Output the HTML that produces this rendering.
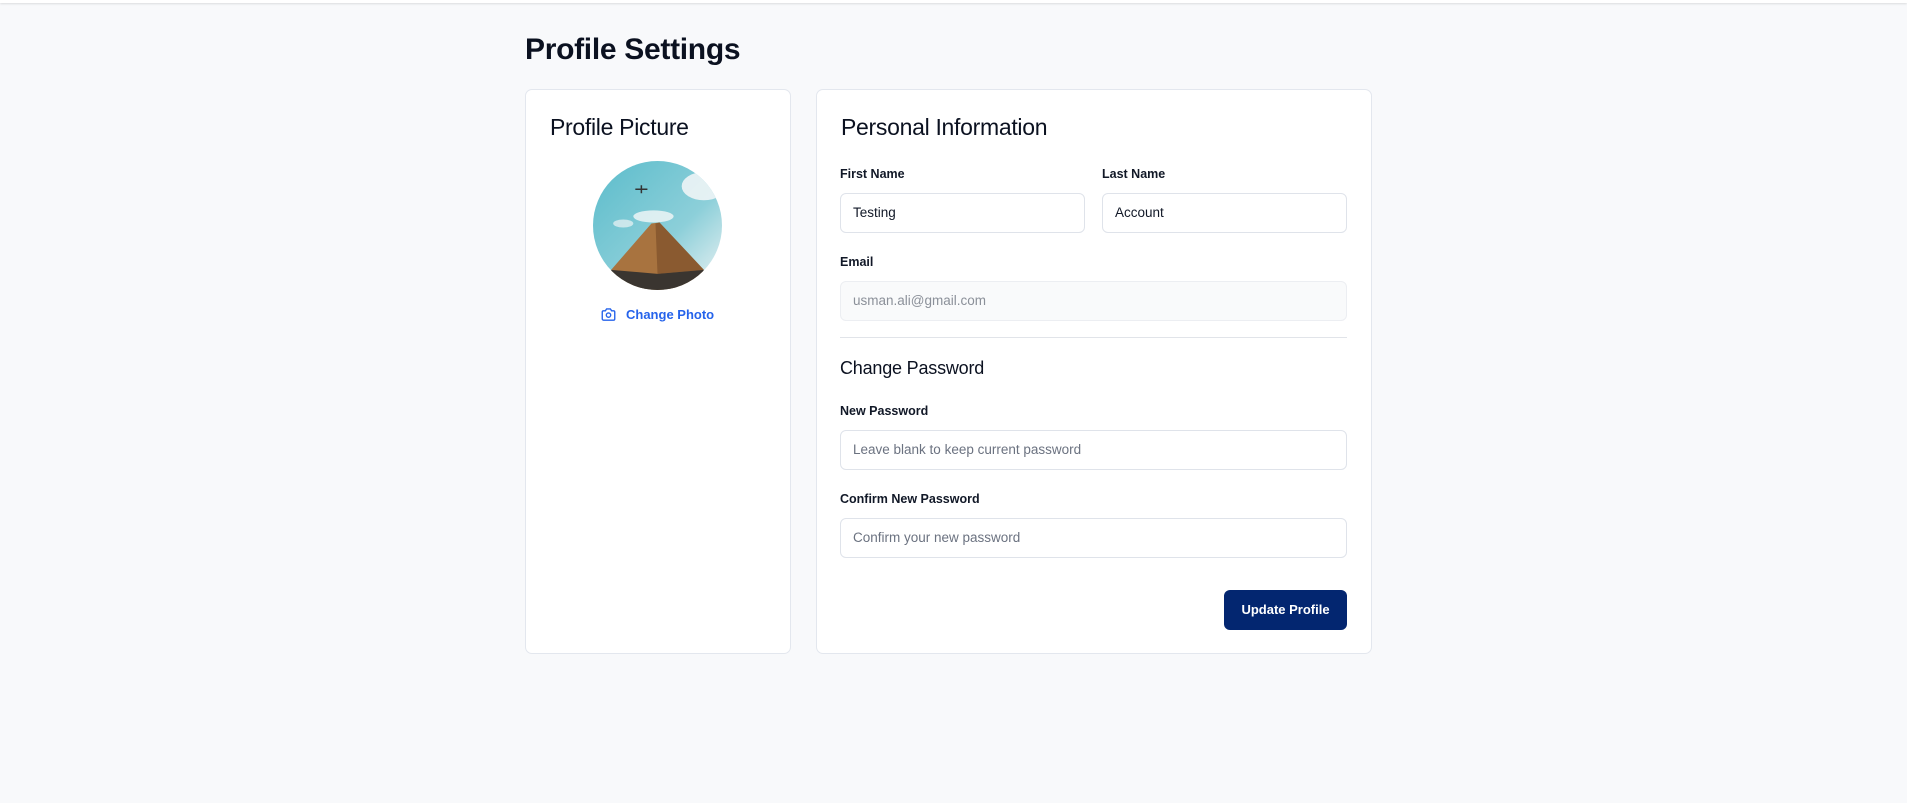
<!DOCTYPE html>
<html><head><meta charset="utf-8"><style>
*{box-sizing:border-box;margin:0;padding:0}
body{width:1907px;height:803px;background:#f8f9fb;font-family:"Liberation Sans",sans-serif;color:#0b1120;position:relative;overflow:hidden}
.top{position:absolute;left:0;top:0;width:1907px;height:3px;background:#fff;box-shadow:0 1px 2px rgba(0,0,0,.12)}
h1{position:absolute;left:525px;top:33px;font-size:30px;font-weight:700;letter-spacing:-0.3px}
.card{position:absolute;top:89px;height:565px;background:#fff;border:1px solid #e3e7ee;border-radius:7px}
h2{position:absolute;font-size:23px;font-weight:400;letter-spacing:-0.3px}
.lbl{position:absolute;font-size:12.5px;font-weight:700;color:#111827}
.inp{position:absolute;height:40px;border:1px solid #dfe3ea;border-radius:6px;background:#fff;font-size:13.5px;padding-left:12px;line-height:38px;color:#111827}
.ph{color:#6b7280}
</style></head><body>
<div class="top"></div>
<h1>Profile Settings</h1>
<div class="card" style="left:525px;width:266px">
  <h2 style="left:24px;top:24px">Profile Picture</h2>
  <svg style="position:absolute;left:67px;top:71px" width="129" height="129" viewBox="0 0 128 128">
    <defs>
      <clipPath id="c"><circle cx="64" cy="64" r="64"/></clipPath>
      <linearGradient id="sky" x1="0" y1="0" x2="1" y2="1"><stop offset="0" stop-color="#5bbccb"/><stop offset=".6" stop-color="#8ccfd9"/><stop offset="1" stop-color="#eef3f4"/></linearGradient>
    </defs>
    <g clip-path="url(#c)">
      <rect width="128" height="128" fill="url(#sky)"/>
      <ellipse cx="110" cy="25" rx="22" ry="14" fill="#f4f7f8" opacity=".85"/>
      <ellipse cx="60" cy="55" rx="20" ry="6" fill="#f4f7f8" opacity=".8"/>
      <ellipse cx="30" cy="62" rx="10" ry="4" fill="#eef4f5" opacity=".7"/>
      <path d="M58 62 L66 61 L110 108 L100 128 L20 128 L18 108 Z" fill="#a8733f"/>
      <path d="M62 62 L66 61 L110 108 L64 112 Z" fill="#8a5a30"/>
      <path d="M18 108 L64 112 L110 108 L100 128 L20 128 Z" fill="#3a3530"/>
      <path d="M42 28 h12 M48 24 v8" stroke="#333" stroke-width="1.5"/>
    </g>
  </svg>
  <div style="position:absolute;left:75px;top:217px;display:flex;align-items:center;color:#2563eb;font-size:13px;font-weight:700">
    <svg width="15" height="13" viewBox="0 0 24 20" fill="none" stroke="#2563eb" stroke-width="2.2"><path d="M2 6a2 2 0 0 1 2-2h3l2-3h6l2 3h3a2 2 0 0 1 2 2v11a2 2 0 0 1-2 2H4a2 2 0 0 1-2-2z"/><circle cx="12" cy="11" r="3.5"/></svg>
    <span style="margin-left:10px">Change Photo</span>
  </div>
</div>
<div class="card" style="left:816px;width:556px">
  <h2 style="left:24px;top:24px">Personal Information</h2>
</div>
<div class="lbl" style="left:840px;top:167px">First Name</div>
<div class="lbl" style="left:1102px;top:167px">Last Name</div>
<div class="inp" style="left:840px;top:193px;width:245px">Testing</div>
<div class="inp" style="left:1102px;top:193px;width:245px">Account</div>
<div class="lbl" style="left:840px;top:255px">Email</div>
<div class="inp" style="left:840px;top:281px;width:507px;background:#f9fafb;color:#8b9099;border-color:#eceef2">usman.ali@gmail.com</div>
<div style="position:absolute;left:840px;top:337px;width:507px;height:1px;background:#e1e4e9"></div>
<div style="position:absolute;left:840px;top:358px;font-size:18px;letter-spacing:-0.2px">Change Password</div>
<div class="lbl" style="left:840px;top:404px">New Password</div>
<div class="inp ph" style="left:840px;top:430px;width:507px">Leave blank to keep current password</div>
<div class="lbl" style="left:840px;top:492px">Confirm New Password</div>
<div class="inp ph" style="left:840px;top:518px;width:507px">Confirm your new password</div>
<div style="position:absolute;left:1224px;top:590px;width:123px;height:40px;background:#032670;border-radius:6px;color:#fff;font-size:13px;font-weight:700;text-align:center;line-height:40px">Update Profile</div>
</body></html>
